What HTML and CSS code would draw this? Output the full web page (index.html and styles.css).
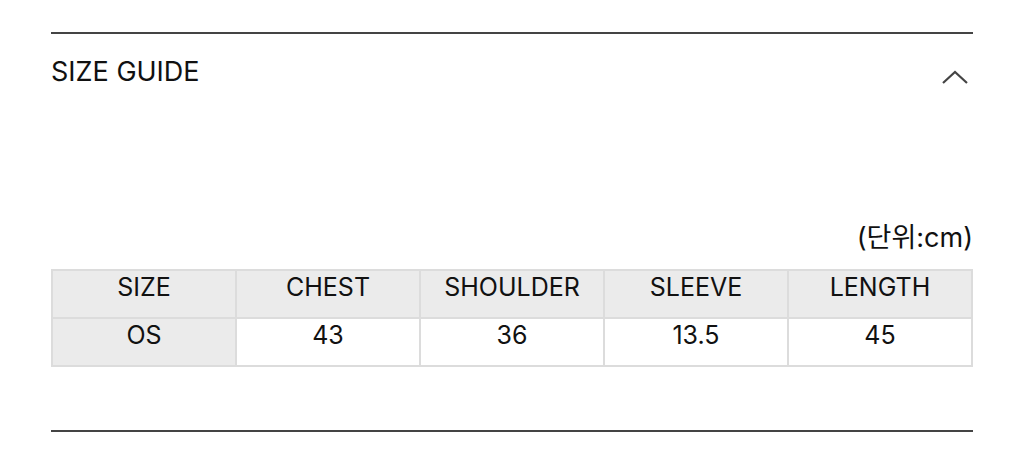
FILE: index.html
```html
<!DOCTYPE html>
<html lang="ko">
<head>
<meta charset="utf-8">
<link rel="stylesheet" href="styles.css">
</head>
<body>
<section class="accordion">
  <div class="acc-head">
    <h2 class="acc-title">SIZE GUIDE</h2>
    <svg class="chev" width="28" height="16" viewBox="0 0 28 16"><path d="M2 14 L14 3 L26 14" fill="none" stroke="#444" stroke-width="2.2"/></svg>
  </div>
  <div class="acc-body">
    <p class="unit">(단위:cm)</p>
    <table class="size-table">
      <tr><th>SIZE</th><th>CHEST</th><th>SHOULDER</th><th>SLEEVE</th><th>LENGTH</th></tr>
      <tr><th>OS</th><td>43</td><td>36</td><td>13.5</td><td>45</td></tr>
    </table>
  </div>
</section>
</body>
</html>
```
FILE: styles.css
```css
html, body { margin: 0; padding: 0; background: #fff; }
body { font-family: Inter, "Noto Sans CJK KR", sans-serif; color: #111; }
.accordion {
  margin: 32px 51px 0 51px;
  width: 922px;
  border-top: 2px solid #444;
  border-bottom: 2px solid #444;
}
.acc-head {
  display: flex;
  justify-content: space-between;
  align-items: center;
  padding: 21px 0 0 0;
  height: 34px;
}
.acc-title {
  margin: 0;
  font-size: 27px;
  font-weight: 400;
  line-height: 34px;
  letter-spacing: 0;
}
.chev { margin-right: 4px; margin-top: 10px; }
.acc-body { padding: 0 0 63px 0; }
.unit {
  margin: 133px 0 0 0;
  text-align: right;
  font-size: 27px;
  line-height: 32px;
  padding-bottom: 15px;
}
.size-table {
  width: 922px;
  border-collapse: collapse;
  table-layout: fixed;
  border: 2px solid #dcdcdc;
}
.size-table th, .size-table td {
  border: 2px solid #dcdcdc;
  height: 48px;
  box-sizing: border-box;
  padding: 1px 0 0 0;
  font-size: 25px;
  line-height: 30px;
  font-weight: 400;
  text-align: center;
  vertical-align: top;
}
.size-table th { background: #ebebeb; }
.size-table td { background: #fff; }
```
